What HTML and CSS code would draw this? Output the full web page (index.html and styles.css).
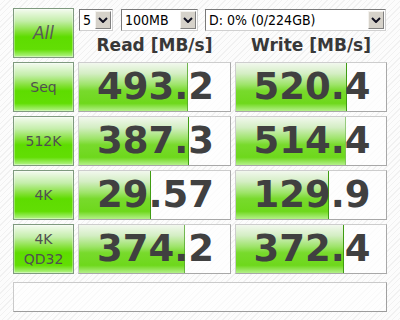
FILE: index.html
```html
<!doctype html>
<html>
  <head>
    <title>CrystalDiskMark</title>
    <link rel="stylesheet" href="styles.css">
  </head>
  <body>
    <div class="app">
      <div class="grid">
        <div class="btn btn-all">All</div>
        <div class="top">
          <div class="selects">
            <div class="sel sel-count">
              <span class="sel-text">5</span>
              <span class="sel-arrow"><svg width="10" height="6" viewBox="0 0 10 6"><path d="M1 1 L5 5 L9 1" fill="none" stroke="#101020" stroke-width="2"/></svg></span>
            </div>
            <div class="sel sel-size">
              <span class="sel-text">100MB</span>
              <span class="sel-arrow"><svg width="10" height="6" viewBox="0 0 10 6"><path d="M1 1 L5 5 L9 1" fill="none" stroke="#101020" stroke-width="2"/></svg></span>
            </div>
            <div class="sel sel-drive">
              <span class="sel-text">D: 0% (0/224GB)</span>
              <span class="sel-arrow"><svg width="10" height="6" viewBox="0 0 10 6"><path d="M1 1 L5 5 L9 1" fill="none" stroke="#101020" stroke-width="2"/></svg></span>
            </div>
          </div>
          <div class="heads">
            <div class="head">Read [MB/s]</div>
            <div class="head">Write [MB/s]</div>
          </div>
        </div>

        <div class="btn">Seq</div>
        <div class="cell" style="--fill: 72%">493.2</div>
        <div class="cell" style="--fill: 74%">520.4</div>

        <div class="btn">512K</div>
        <div class="cell" style="--fill: 73%">387.3</div>
        <div class="cell" style="--fill: 73%">514.4</div>

        <div class="btn">4K</div>
        <div class="cell" style="--fill: 48%">29.57</div>
        <div class="cell" style="--fill: 62%">129.9</div>

        <div class="btn btn-two">4K<br>QD32</div>
        <div class="cell" style="--fill: 70%">374.2</div>
        <div class="cell" style="--fill: 72%">372.4</div>
      </div>
      <div class="comment"></div>
    </div>
  </body>
</html>
```

FILE: styles.css
```css
html, body {
  margin: 0;
  height: 100%;
}
body {
  background-color: #fbfbfb;
  background-image: repeating-linear-gradient(135deg, #fcfcfc 0px, #fcfcfc 3px, #f1f1f1 3px, #f1f1f1 4px);
  font-family: "DejaVu Sans", sans-serif;
}
.app {
  padding: 8px 0 0 13px;
  width: 374px;
}
.grid {
  display: grid;
  grid-template-columns: 61px 153px 152px;
  grid-auto-rows: 50px;
  column-gap: 4px;
  row-gap: 4px;
}
.btn {
  box-sizing: border-box;
  border: 1px solid #7f9a7f;
  box-shadow: inset 0 0 0 1px rgba(255, 255, 255, 0.35);
  background: linear-gradient(to bottom, #f4fbf0 0%, #c4eeaa 25%, #7fe030 48%, #5edc00 58%, #62de04 84%, #b6f48c 100%);
  color: #505050;
  font-size: 14px;
  display: flex;
  align-items: center;
  justify-content: center;
  text-align: center;
  line-height: 20px;
}
.btn-all {
  font-size: 17px;
  font-style: italic;
  color: #5a5a5a;
}
.top {
  grid-column: 2 / 4;
  display: flex;
  flex-direction: column;
}
.selects {
  display: flex;
  margin: 1px 0 0 1px;
  height: 22px;
}
.sel {
  box-sizing: border-box;
  height: 22px;
  border: 1px solid #7a7a7a;
  border-right-color: #d0d0d0;
  border-bottom-color: #d0d0d0;
  background: #fff;
  display: flex;
  align-items: center;
  padding: 1px;
}
.sel-count {
  width: 34px;
  margin-right: 8px;
}
.sel-size {
  width: 77px;
  margin-right: 7px;
}
.sel-drive {
  width: 181px;
}
.sel-text {
  flex: 1;
  padding-left: 2px;
  font-family: "DejaVu Sans Condensed", "DejaVu Sans", sans-serif;
  font-stretch: condensed;
  font-size: 14px;
  color: #000;
  line-height: 18px;
}
.sel-arrow {
  box-sizing: border-box;
  width: 16px;
  height: 18px;
  background: #d6d2ca;
  border: 1px solid #f4f2ee;
  border-right-color: #808080;
  border-bottom-color: #808080;
  display: flex;
  align-items: center;
  justify-content: center;
}
.heads {
  display: grid;
  grid-template-columns: 153px 152px;
  column-gap: 4px;
  flex: 1;
}
.head {
  text-align: center;
  font-weight: bold;
  font-size: 17px;
  color: #383838;
  padding-top: 4px;
}
.cell {
  box-sizing: border-box;
  border: 1px solid #cdcdcd;
  border-right-color: #a8a8a8;
  border-bottom-color: #a8a8a8;
  background-color: rgba(255, 255, 255, 0.7);
  background-image:
    linear-gradient(to left, #3f9c12 0px, #3f9c12 1px, transparent 1px),
    linear-gradient(to bottom, #f2f8ee 0%, #d4eec4 22%, #9ee46a 45%, #78da2c 58%, #6ed81c 84%, #b4f08a 100%);
  background-size: var(--fill) 100%;
  background-repeat: no-repeat;
  text-align: center;
  font-weight: bold;
  font-size: 37px;
  line-height: 48px;
  color: #404040;
  padding-left: 2px;
}
.comment {
  box-sizing: border-box;
  margin-top: 8px;
  width: 374px;
  height: 30px;
  border: 1px solid #cacaca;
  border-right-color: #a0a0a0;
  border-bottom-color: #9c9c9c;
  background: rgba(255, 255, 255, 0.6);
}
```
